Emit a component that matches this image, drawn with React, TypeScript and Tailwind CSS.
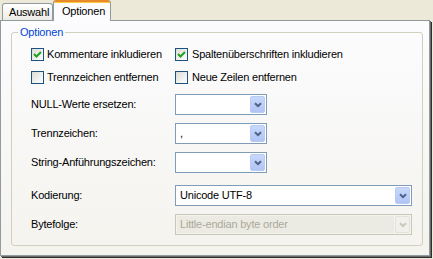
import React from "react";

const font = { fontFamily: '"Liberation Sans", Arial, sans-serif' };

function Check({ checked }: { checked?: boolean }) {
  return (
    <span className="relative w-[13px] h-[13px] border border-[#1c5180] bg-gradient-to-br from-[#dcdcd7] to-[#ffffff] flex items-center justify-center shrink-0">
      {checked && (
        <svg width="9" height="9" viewBox="0 0 9 9">
          <path d="M1 4 L3.5 6.5 L8 2" stroke="#21a121" strokeWidth="2" fill="none" />
        </svg>
      )}
    </span>
  );
}

function Chevron({ disabled }: { disabled?: boolean }) {
  return (
    <svg width="8" height="6" viewBox="0 0 8 6">
      <path d="M1 1.2 L4 4.2 L7 1.2" stroke={disabled ? "#c9c7ba" : "#4d6185"} strokeWidth="2" fill="none" />
    </svg>
  );
}

function Select({ value, wide, disabled }: { value?: string; wide?: boolean; disabled?: boolean }) {
  return (
    <div
      className={`h-[21px] ${wide ? "w-[237px]" : "w-[92px]"} border ${
        disabled ? "border-[#c9c7ba] bg-[#f5f4ea]" : "border-[#7f9db9] bg-white"
      } flex items-center p-[1px]`}
    >
      <div
        className={`flex-1 h-full flex items-center pl-[3px] text-[11px] whitespace-nowrap ${
          disabled ? "text-[#aca899] bg-[#ebebe4] mr-[1px]" : "text-black"
        }`}
      >
        {value}
      </div>
      <div
        className={`w-[15px] h-[17px] rounded-[2px] border flex items-center justify-center ${
          disabled
            ? "border-[#e2e1da] bg-[#f1f0ea]"
            : "border-[#b9cbf3] bg-gradient-to-b from-[#c8d8fc] to-[#b0c4f5]"
        }`}
      >
        <Chevron disabled={disabled} />
      </div>
    </div>
  );
}

function Row({ label, children, mt }: { label: string; children: React.ReactNode; mt: string }) {
  return (
    <div className={`grid grid-cols-[144px_1fr] items-center ${mt}`}>
      <span className="whitespace-nowrap">{label}</span>
      {children}
    </div>
  );
}

export default function App() {
  return (
    <div className="w-[433px] h-[259px] bg-[#ece9d8] text-black text-[11px] leading-[13px] tracking-[-0.2px]" style={font}>
      <div className="flex h-[20px] items-end pl-[2px] relative z-10">
        <div className="h-[17px] w-[51px] border border-b-0 border-[#919b9c] rounded-t-[3px] bg-gradient-to-b from-[#ffffff] to-[#ecebe6] flex items-center pl-[6px] pt-[1px]">
          Auswahl
        </div>
        <div className="h-[21px] w-[58px] -mb-[1px] border-x border-[#919b9c] rounded-t-[3px] bg-[#fcfcfe] flex flex-col">
          <div className="h-[3px] bg-[#e68b2c] rounded-t-[2px] border-b border-[#ffc83c]" />
          <div className="flex-1 flex items-center pl-[8px] pb-[1px]">Optionen</div>
        </div>
      </div>
      <div className="w-[430px] h-[236px] border border-[#919b9c] bg-gradient-to-b from-[#fcfcfe] to-[#f4f3ee] shadow-[1px_1px_0_0_#6b6b6b,2px_2px_0_0_#2e2e2e] pt-[11px] pl-[10px]">
        <div className="relative w-[412px] h-[214px] border border-[#d0d0bf] rounded-[3px] pt-[15px] pl-[19px]">
          <span className="absolute -top-[7px] left-[6px] px-[2px] bg-[#fbfbfc] text-[#0046d5]">
            Optionen
          </span>
          <div className="grid grid-cols-[144px_1fr] gap-y-[10px]">
            <label className="flex items-center gap-[3px] h-[13px] whitespace-nowrap">
              <Check checked />
              <span>Kommentare inkludieren</span>
            </label>
            <label className="flex items-center gap-[4px] h-[13px] whitespace-nowrap">
              <Check checked />
              <span>Spaltenüberschriften inkludieren</span>
            </label>
            <label className="flex items-center gap-[3px] h-[13px] whitespace-nowrap">
              <Check />
              <span>Trennzeichen entfernen</span>
            </label>
            <label className="flex items-center gap-[4px] h-[13px] whitespace-nowrap">
              <Check />
              <span>Neue Zeilen entfernen</span>
            </label>
          </div>
          <Row label="NULL-Werte ersetzen:" mt="mt-[10px]">
            <Select />
          </Row>
          <Row label="Trennzeichen:" mt="mt-[8px]">
            <Select value="," />
          </Row>
          <Row label="String-Anführungszeichen:" mt="mt-[8px]">
            <Select />
          </Row>
          <Row label="Kodierung:" mt="mt-[12px]">
            <Select value="Unicode UTF-8" wide />
          </Row>
          <Row label="Bytefolge:" mt="mt-[8px]">
            <Select value="Little-endian byte order" wide disabled />
          </Row>
        </div>
      </div>
    </div>
  );
}
